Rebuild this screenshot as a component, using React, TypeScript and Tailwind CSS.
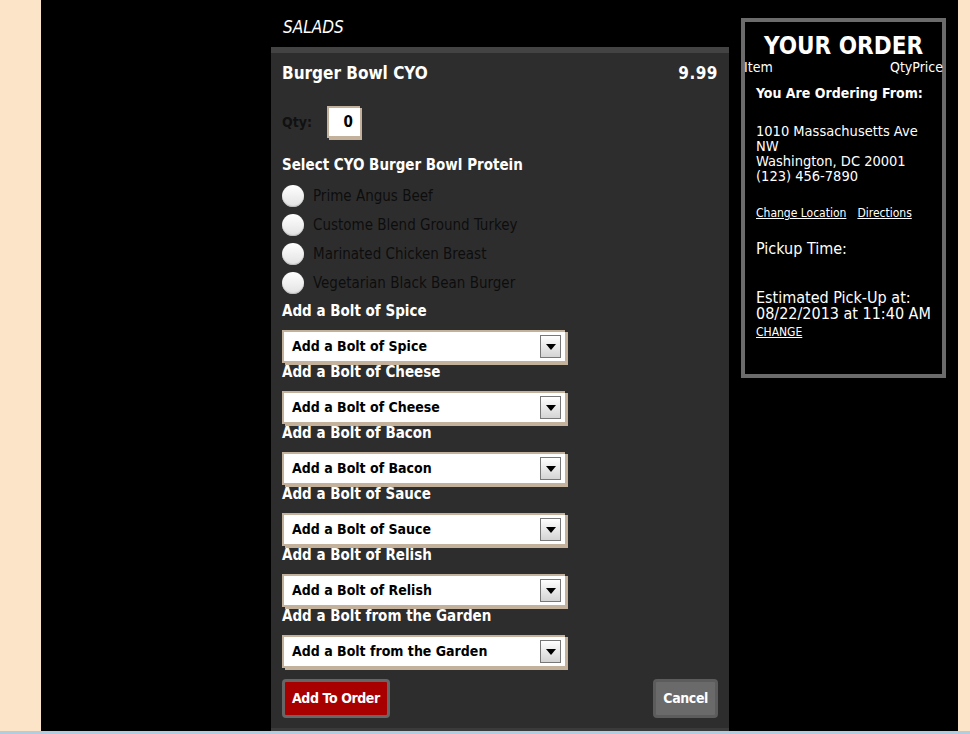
import { useState } from "react";

const FONT = "font-['DejaVu_Sans_Condensed','DejaVu_Sans',sans-serif]";

const proteins = [
  "Prime Angus Beef",
  "Custome Blend Ground Turkey",
  "Marinated Chicken Breast",
  "Vegetarian Black Bean Burger",
];

const bolts = [
  "Add a Bolt of Spice",
  "Add a Bolt of Cheese",
  "Add a Bolt of Bacon",
  "Add a Bolt of Sauce",
  "Add a Bolt of Relish",
  "Add a Bolt from the Garden",
];

function FakeSelect({ label }: { label: string }) {
  return (
    <div className="mt-[10px] flex h-[33px] w-[283px] items-center justify-between border-2 border-r-0 border-[#c4b19c] bg-white pl-[8px] pr-[4px] shadow-[3px_2px_0_#c4b19c]">
      <span className="text-[14px] font-bold text-black">{label}</span>
      <span className="flex h-[23px] w-[21px] items-start justify-center border border-[#777] bg-gradient-to-b from-white to-[#d4d4d4] pt-[8px]">
        <span className="h-0 w-0 border-x-[5px] border-t-[6px] border-x-transparent border-t-black" />
      </span>
    </div>
  );
}

export default function App() {
  const [qty] = useState(0);

  return (
    <div className={`flex h-[734px] w-full flex-col overflow-hidden ${FONT}`}>
      <div className="flex flex-1">
        {/* left margin */}
        <div className="w-[41px] bg-[#fce4c8]" />

        {/* black stage */}
        <div className="flex flex-1 bg-black pl-[230px]">
          {/* menu column */}
          <div className="flex w-[458px] flex-col">
            <div className="h-[47px] pl-[12px] pt-[15px] text-[17px] italic leading-[24px] text-white">
              SALADS
            </div>

            <div className="flex flex-1 flex-col border-t-[6px] border-[#434343] bg-[#2d2d2d] px-[11px]">
              {/* item title */}
              <div className="flex items-center justify-between pt-[9px]">
                <span className="text-[17px] font-bold leading-[22px] text-white">
                  Burger Bowl CYO
                </span>
                <span className="text-[17px] font-bold leading-[22px] tracking-[0.5px] text-white">
                  9.99
                </span>
              </div>

              {/* qty */}
              <div className="mt-[22px] flex items-center">
                <span className="text-[14px] font-bold text-[#111]">Qty:</span>
                <span className="ml-[15px] flex h-[32px] w-[33px] items-center justify-end border-2 border-r-0 border-[#c4b19c] bg-white pr-[7px] text-[15px] font-bold text-black shadow-[2px_2px_0_#c4b19c]">
                  {qty}
                </span>
              </div>

              {/* protein */}
              <div className="mt-[17px] text-[15px] font-bold leading-[20px] text-white">
                Select CYO Burger Bowl Protein
              </div>
              <div className="mt-[10px] flex flex-col gap-[7px]">
                {proteins.map((p) => (
                  <label key={p} className="flex h-[22px] items-center">
                    <span className="h-[22px] w-[22px] rounded-full bg-gradient-to-b from-white to-[#e2e2e2] shadow-[inset_0_-1px_1px_#bbb]" />
                    <span className="ml-[9px] text-[15px] text-[#0d0d0d]">{p}</span>
                  </label>
                ))}
              </div>

              {/* bolts */}
              <div className="mt-[8px] flex flex-col">
                {bolts.map((b) => (
                  <div key={b}>
                    <div className="h-[18px] text-[15px] font-bold leading-[18px] text-white">
                      {b}
                    </div>
                    <FakeSelect label={b} />
                  </div>
                ))}
              </div>

              {/* buttons */}
              <div className="mt-[11px] flex justify-between">
                <button className="h-[39px] rounded-[4px] border-[3px] border-[#666] bg-[#a80000] px-[7px] text-[14px] font-bold tracking-[-0.4px] text-white">
                  Add To Order
                </button>
                <button className="h-[39px] rounded-[4px] border-[3px] border-[#5c5c5c] bg-[#6a6a6a] px-[7px] text-[14px] font-bold tracking-[-0.4px] text-white">
                  Cancel
                </button>
              </div>
              <div className="flex-1" />
            </div>
            <div className="h-[3px] bg-[#3a3a3a]" />
          </div>

          {/* order summary */}
          <div className="ml-[12px] mt-[18px] h-[360px] w-[205px] border-4 border-[#6b6b6b] bg-black text-white">
            <div className="pt-[11px] text-center text-[24px] font-bold leading-[26px]">
              YOUR ORDER
            </div>
            <div className="-mx-[1px] flex justify-between text-[14px] leading-[16px]">
              <span>Item</span>
              <span>QtyPrice</span>
            </div>
            <div className="px-[11px]">
              <div className="mt-[9px] text-[14px] font-bold leading-[18px]">
                You Are Ordering From:
              </div>
              <div className="mt-[22px] text-[14.5px] leading-[15px]">
                1010 Massachusetts Ave
                <br />
                NW
                <br />
                Washington, DC 20001
                <br />
                (123) 456-7890
              </div>
              <div className="mt-[22px] flex gap-[11px] text-[12px] leading-[15px] underline">
                <span>Change Location</span>
                <span>Directions</span>
              </div>
              <div className="mt-[18px] text-[16px] leading-[20px]">Pickup Time:</div>
              <div className="mt-[31px] text-[16px] leading-[16px]">
                <div>Estimated Pick-Up at:</div>
                <div>08/22/2013 at 11:40 AM</div>
              </div>
              <div className="mt-[3px] text-[12px] leading-[15px] underline">CHANGE</div>
            </div>
          </div>
        </div>

        {/* right margin */}
        <div className="w-[12px] bg-[#fce4c8]" />
      </div>
      <div className="h-[3px] bg-[#b3cde0]" />
    </div>
  );
}
